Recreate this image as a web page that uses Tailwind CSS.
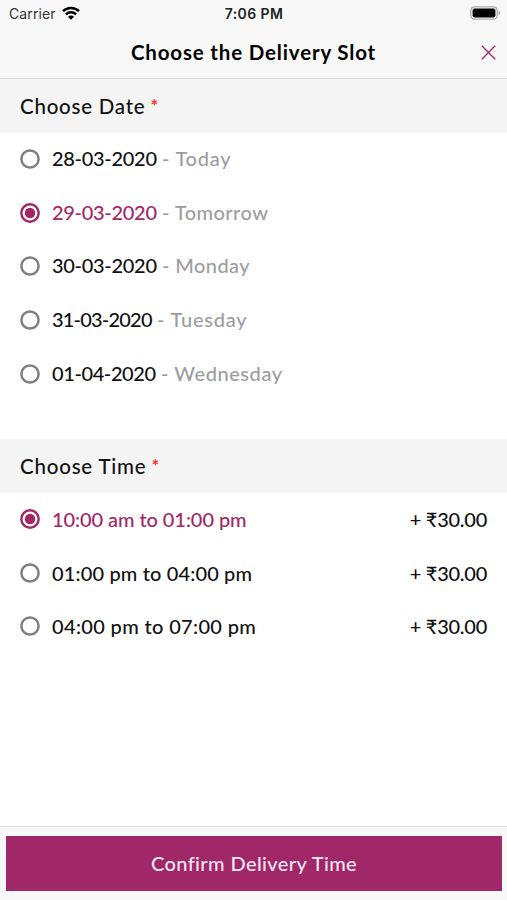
<!DOCTYPE html>
<html lang="en">
  <head>
    <meta charset="UTF-8" />
    <meta name="viewport" content="width=device-width, initial-scale=1.0" />
    <script src="https://cdn.jsdelivr.net/npm/@tailwindcss/browser@4"></script>
    <title>Choose the Delivery Slot</title>
  </head>
  <body class="bg-white">
    <!-- radio icons -->
    <svg class="hidden">
      <symbol id="radio-off" viewBox="0 0 20 20">
        <circle cx="10" cy="10" r="8.6" fill="none" stroke="#808080" stroke-width="2.5" />
      </symbol>
      <symbol id="radio-on" viewBox="0 0 20 20">
        <circle cx="10" cy="10" r="8.7" fill="none" stroke="#a32665" stroke-width="2.4" />
        <circle cx="10" cy="10" r="5.2" fill="#a32665" />
      </symbol>
    </svg>

    <div class="flex flex-col h-[900px] w-[507px] overflow-hidden whitespace-nowrap font-['Lato',sans-serif] font-medium text-[20px] text-[#111] leading-6">
      <!-- status bar -->
      <div class="h-[27px] shrink-0 bg-[#f8f8f8] grid grid-cols-3 items-center pl-[9px] pr-[6px] font-['Inter',sans-serif] text-[14px]">
        <div class="flex items-center gap-[6px] font-normal text-[#333]">
          <span class="tracking-[0.1px]">Carrier</span>
          <svg class="w-[18px] h-[14px] mb-[2px]" viewBox="0 0 18 14" fill="none" stroke="#000" stroke-width="2.5">
            <path d="M1 5.2a11.4 11.4 0 0 1 16 0M3.9 8.4a7.3 7.3 0 0 1 10.2 0" />
            <path d="M9 13.8 6 10.7a4.2 4.2 0 0 1 6 0z" fill="#000" stroke="none" />
          </svg>
        </div>
        <span class="text-center font-semibold text-[#222] tracking-[0.4px] -ml-[2px]">7:06 PM</span>
        <svg class="w-[31px] h-[14px] justify-self-end mb-[1px]" viewBox="0 0 31 14">
          <rect x="0.8" y="0.8" width="26.4" height="12.4" rx="3.6" fill="#f8f8f8" stroke="#aaa" stroke-width="1.3" />
          <rect x="2.6" y="2.6" width="22.8" height="8.8" rx="1.8" fill="#000" />
          <path d="M28.6 4.6c2.2.8 2.2 4 0 4.8z" fill="#aaa" />
        </svg>
      </div>

      <!-- title -->
      <header class="h-[52px] shrink-0 bg-[#f8f8f8] grid grid-cols-[32px_1fr_32px] items-center border-b border-[#dcdcdc]">
        <h1 class="col-start-2 text-center font-bold text-black text-[20.5px] tracking-[0.83px] mb-[2px]">Choose the Delivery Slot</h1>
        <svg class="w-[15px] h-[15px] ml-[6px]" viewBox="0 0 15 15" fill="none" stroke="#a32665" stroke-width="1.3">
          <path d="M.8.8 14.2 14.2M14.2.8.8 14.2" />
        </svg>
      </header>

      <!-- dates -->
      <h2 class="h-[54px] shrink-0 bg-[#f4f4f4] flex items-center pl-[20px] gap-[5px] text-[20.5px]"><span class="tracking-[0.76px]">Choose Date</span><span class="text-[#f33] text-[18px] font-bold">*</span></h2>
      <ul class="h-[306px] shrink-0">
        <li class="h-[53.7px] flex items-center pl-[20px] pb-[2px]">
          <svg class="w-5 h-5 mr-3"><use href="#radio-off" /></svg>
          <span class="w-[104px] tracking-[-0.3px] mb-[2px]">28-03-2020</span><span class="ml-[6px] mb-[2px] text-[#9d9d9f] tracking-[0.75px]">- Today</span>
        </li>
        <li class="h-[53.7px] flex items-center pl-[20px] pb-[2px]">
          <svg class="w-5 h-5 mr-3"><use href="#radio-on" /></svg>
          <span class="w-[104px] tracking-[-0.3px] mb-[2px] text-[#a32665]">29-03-2020</span><span class="ml-[6px] mb-[2px] text-[#9d9d9f] tracking-[0.45px]">- Tomorrow</span>
        </li>
        <li class="h-[53.7px] flex items-center pl-[20px] pb-[2px]">
          <svg class="w-5 h-5 mr-3"><use href="#radio-off" /></svg>
          <span class="w-[104px] tracking-[-0.3px] mb-[2px]">30-03-2020</span><span class="ml-[6px] mb-[2px] text-[#9d9d9f] tracking-[0.4px]">- Monday</span>
        </li>
        <li class="h-[53.7px] flex items-center pl-[20px] pb-[2px]">
          <svg class="w-5 h-5 mr-3"><use href="#radio-off" /></svg>
          <span class="w-[99px] tracking-[-0.8px] mb-[2px]">31-03-2020</span><span class="ml-[6px] mb-[2px] text-[#9d9d9f] tracking-[0.75px]">- Tuesday</span>
        </li>
        <li class="h-[53.7px] flex items-center pl-[20px] pb-[2px]">
          <svg class="w-5 h-5 mr-3"><use href="#radio-off" /></svg>
          <span class="w-[103px] tracking-[-0.4px] mb-[2px]">01-04-2020</span><span class="ml-[6px] mb-[2px] text-[#9d9d9f] tracking-[0.55px]">- Wednesday</span>
        </li>
      </ul>

      <!-- times -->
      <h2 class="h-[54px] shrink-0 bg-[#f4f4f4] flex items-center pl-[20px] gap-[5px] text-[20.5px]"><span class="tracking-[0.8px]">Choose Time</span><span class="text-[#f33] text-[18px] font-bold">*</span></h2>
      <ul class="flex-1">
        <li class="h-[53.7px] flex items-center pl-[20px] pr-[20px] pb-[2px]">
          <svg class="w-5 h-5 mr-3"><use href="#radio-on" /></svg>
          <span class="text-[#a32665] tracking-[-0.07px]">10:00 am to 01:00 pm</span><span class="ml-auto tracking-[-0.25px]">+ ₹30.00</span>
        </li>
        <li class="h-[53.7px] flex items-center pl-[20px] pr-[20px] pb-[2px]">
          <svg class="w-5 h-5 mr-3"><use href="#radio-off" /></svg>
          <span class="tracking-[0.15px]">01:00 pm to 04:00 pm</span><span class="ml-auto tracking-[-0.25px]">+ ₹30.00</span>
        </li>
        <li class="h-[53.7px] flex items-center pl-[20px] pr-[20px] pb-[2px]">
          <svg class="w-5 h-5 mr-3"><use href="#radio-off" /></svg>
          <span class="tracking-[0.35px]">04:00 pm to 07:00 pm</span><span class="ml-auto tracking-[-0.25px]">+ ₹30.00</span>
        </li>
      </ul>

      <footer class="h-[74px] shrink-0 bg-[#f8f8f8] border-t border-[#e4e4e4] pt-[9px] pl-[6px] pr-[5px]">
        <button class="w-full h-[55px] pb-[2px] bg-[#a02768] text-[#fbe6f3] tracking-[0.4px]">Confirm Delivery Time</button>
      </footer>
    </div>
  </body>
</html>
